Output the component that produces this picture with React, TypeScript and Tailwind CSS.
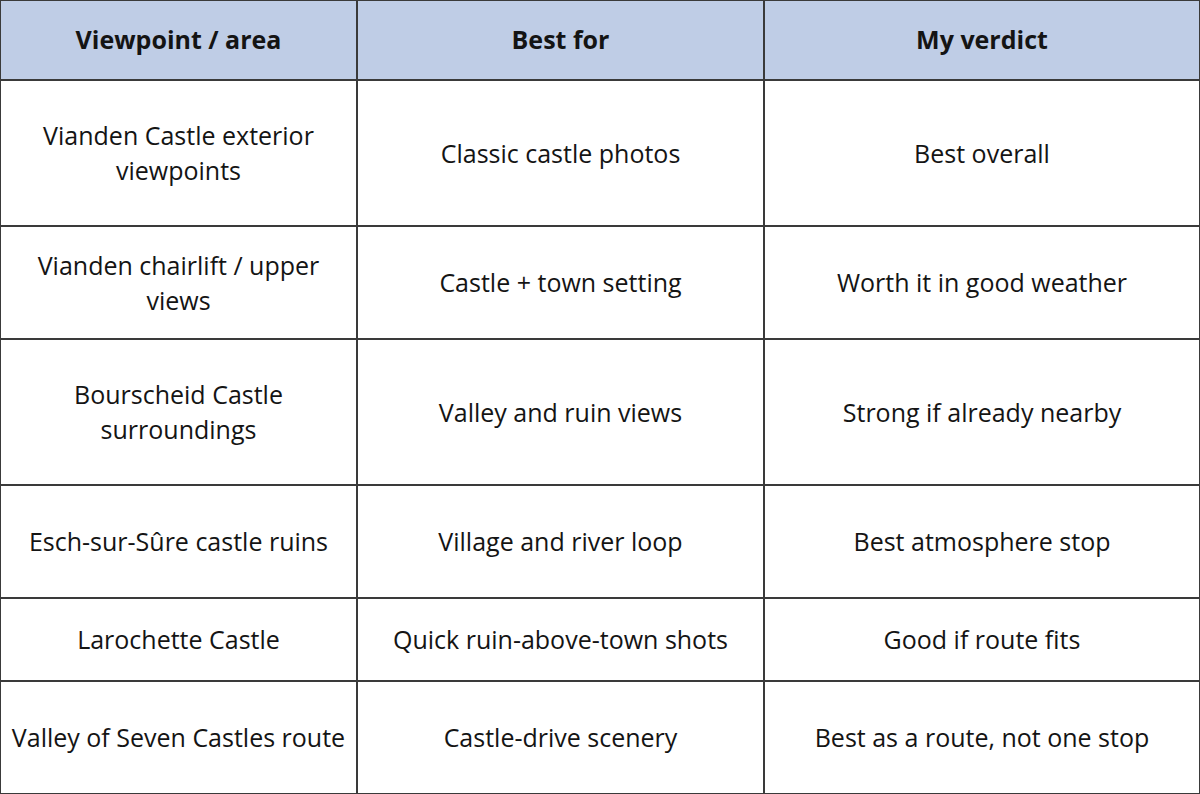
import React from "react";

const rows: { h: string; c: [string, string, string] }[] = [
  { h: "h-[146px]", c: ["Vianden Castle exterior viewpoints", "Classic castle photos", "Best overall"] },
  { h: "h-[113px]", c: ["Vianden chairlift / upper views", "Castle + town setting", "Worth it in good weather"] },
  { h: "h-[146px]", c: ["Bourscheid Castle surroundings", "Valley and ruin views", "Strong if already nearby"] },
  { h: "h-[113px]", c: ["Esch-sur-Sûre castle ruins", "Village and river loop", "Best atmosphere stop"] },
  { h: "h-[83px]", c: ["Larochette Castle", "Quick ruin-above-town shots", "Good if route fits"] },
  { h: "h-[113px]", c: ["Valley of Seven Castles route", "Castle-drive scenery", "Best as a route, not one stop"] },
];

export default function App() {
  return (
    <div
      className="w-[1200px] h-[794px] overflow-hidden bg-white text-[#141414]"
      style={{ fontFamily: '"Open Sans", "Noto Sans", sans-serif' }}
    >
      <div className="grid grid-cols-[357px_407px_436px] border-t border-l border-[#3a3a3a]">
        {["Viewpoint / area", "Best for", "My verdict"].map((t) => (
          <div
            key={t}
            className="h-[80px] flex items-center justify-center bg-[#bfcde6] border-b-2 border-r-2 border-[#3a3a3a] font-bold text-[25px]"
          >
            {t}
          </div>
        ))}
        {rows.map((r, ri) =>
          r.c.map((t, ci) => (
            <div
              key={ri + "-" + ci}
              className={`${r.h} flex items-center justify-center text-center px-2 border-b-2 border-r-2 border-[#3a3a3a] text-[25px] leading-[35px]`}
            >
              {t}
            </div>
          ))
        )}
      </div>
    </div>
  );
}
